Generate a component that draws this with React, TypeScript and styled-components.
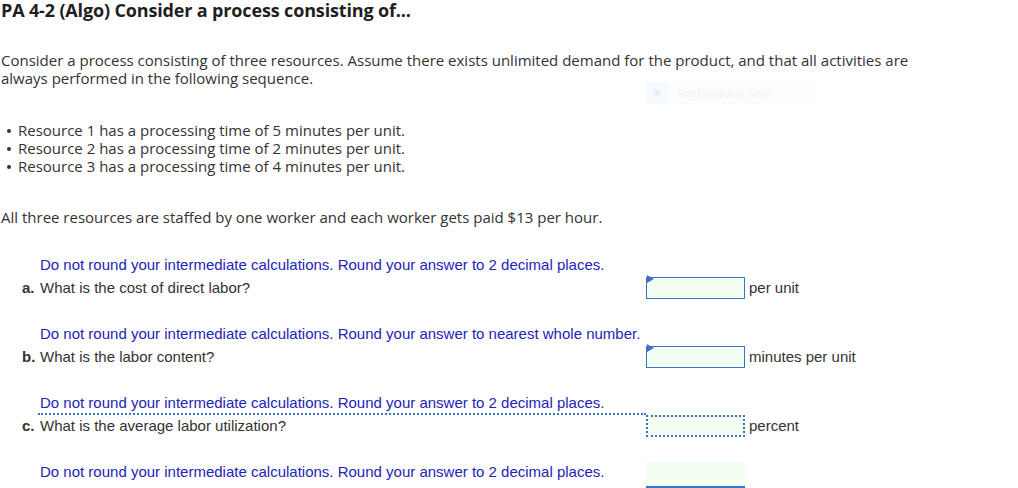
import React from "react";
import styled, { createGlobalStyle } from "styled-components";

const GlobalStyle = createGlobalStyle`
  html, body {
    margin: 0;
    padding: 0;
    background: #ffffff;
  }
  body {
    font-family: "Open Sans", "Lato", sans-serif;
    color: #333333;
  }
`;

const Page = styled.div`
  position: relative;
  width: 1018px;
  height: 488px;
  overflow: hidden;
  padding: 0 0 0 1px;
  box-sizing: border-box;
`;

const Title = styled.h1`
  margin: 0;
  font-family: "Open Sans", sans-serif;
  font-weight: 700;
  font-size: 18px;
  line-height: 21px;
  letter-spacing: -0.15px;
  color: #1f1f1f;
`;

const Para = styled.p<{ $top?: number }>`
  margin: ${(p) => p.$top ?? 0}px 0 0 0;
  font-size: 15px;
  line-height: 18px;
  color: #333333;
  width: 920px;
`;

const Bullets = styled.ul`
  margin: 34px 0 0 0;
  padding: 0 0 0 17px;
  font-size: 15px;
  line-height: 18px;
  color: #333333;
  list-style: none;

  li {
    position: relative;
  }
  li::before {
    content: "";
    position: absolute;
    left: -11px;
    top: 8px;
    width: 4px;
    height: 4px;
    border-radius: 50%;
    background: #333333;
  }
`;

const Questions = styled.div`
  margin-top: 30px;
  display: flex;
  flex-direction: column;
  gap: 26px;
`;

const Part = styled.div`
  display: grid;
  grid-template-columns: 18px 606px 99px auto;
  row-gap: 3px;
  align-items: center;
  padding-left: 21px;
  font-family: "Liberation Sans", Arial, sans-serif;
  font-size: 15px;
  line-height: 18px;
`;

const Hint = styled.div<{ $span?: string }>`
  grid-column: ${(p) => p.$span ?? "2 / 5"};
  align-self: start;
  color: #2424b8;
  height: 18px;
`;

const Letter = styled.div`
  font-weight: bold;
  color: #333333;
`;

const QText = styled.div<{ $focus?: boolean }>`
  align-self: stretch;
  display: flex;
  align-items: center;
  color: #333333;
  margin-left: -2px;
  padding-left: 2px;
  margin-top: -2px;
  border-top: 2px dotted ${(p) => (p.$focus ? "#3b74c0" : "transparent")};
`;

const Input = styled.div<{ $focus?: boolean }>`
  position: relative;
  box-sizing: border-box;
  width: 99px;
  height: 22px;
  background: #f4fff3;
  border: ${(p) => (p.$focus ? "2px dotted #3b74c0" : "1px solid #3b74c0")};

  &::before {
    content: "";
    display: ${(p) => (p.$focus ? "none" : "block")};
    position: absolute;
    left: 0;
    top: 0;
    border-left: 7px solid #3b74c0;
    border-top: 4px solid transparent;
    border-bottom: 4px solid transparent;
    transform: translateY(-3px);
  }
`;

const Unit = styled.div`
  color: #333333;
  padding-left: 4px;
`;

const LastInput = styled.div`
  align-self: start;
  width: 99px;
  height: 25px;
  margin-top: -2px;
  background: #f4fff3;
  border-bottom: 2px solid #3b74c0;
`;

const Snip = styled.div`
  position: absolute;
  left: 646px;
  top: 82px;
  width: 172px;
  height: 22px;
  display: flex;
  align-items: center;
  background: #fbfdff;
  font-family: "DejaVu Sans", sans-serif;
  font-size: 11px;
  color: #f0f2f6;
`;

const SnipIcon = styled.div`
  width: 22px;
  height: 22px;
  background: #f5faff;
  display: flex;
  align-items: center;
  justify-content: center;
  margin-right: 10px;

  &::after {
    content: "";
    width: 6px;
    height: 6px;
    border-radius: 50%;
    background: #f5e8ec;
  }
`;

type Q = {
  letter: string;
  hint: string;
  text: string;
  unit: string;
  focus?: boolean;
};

const parts: Q[] = [
  {
    letter: "a.",
    hint: "Do not round your intermediate calculations. Round your answer to 2 decimal places.",
    text: "What is the cost of direct labor?",
    unit: "per unit",
  },
  {
    letter: "b.",
    hint: "Do not round your intermediate calculations. Round your answer to nearest whole number.",
    text: "What is the labor content?",
    unit: "minutes per unit",
  },
  {
    letter: "c.",
    hint: "Do not round your intermediate calculations. Round your answer to 2 decimal places.",
    text: "What is the average labor utilization?",
    unit: "percent",
    focus: true,
  },
];

export default function App() {
  return (
    <>
      <GlobalStyle />
      <Page>
        <Title>PA 4-2 (Algo) Consider a process consisting of...</Title>
        <Para $top={30}>
          Consider a process consisting of three resources. Assume there exists unlimited demand for the
          product, and that all activities are always performed in the following sequence.
        </Para>
        <Bullets>
          <li>Resource 1 has a processing time of 5 minutes per unit.</li>
          <li>Resource 2 has a processing time of 2 minutes per unit.</li>
          <li>Resource 3 has a processing time of 4 minutes per unit.</li>
        </Bullets>
        <Para $top={33}>All three resources are staffed by one worker and each worker gets paid $13 per hour.</Para>
        <Questions>
          {parts.map((q) => (
            <Part key={q.letter}>
              <Hint>{q.hint}</Hint>
              <Letter>{q.letter}</Letter>
              <QText $focus={q.focus}>{q.text}</QText>
              <Input $focus={q.focus} />
              <Unit>{q.unit}</Unit>
            </Part>
          ))}
          <Part>
            <Hint $span="2 / 3">
              Do not round your intermediate calculations. Round your answer to 2 decimal places.
            </Hint>
            <LastInput />
          </Part>
        </Questions>
        <Snip>
          <SnipIcon />
          Rectangular Snip
        </Snip>
      </Page>
    </>
  );
}
